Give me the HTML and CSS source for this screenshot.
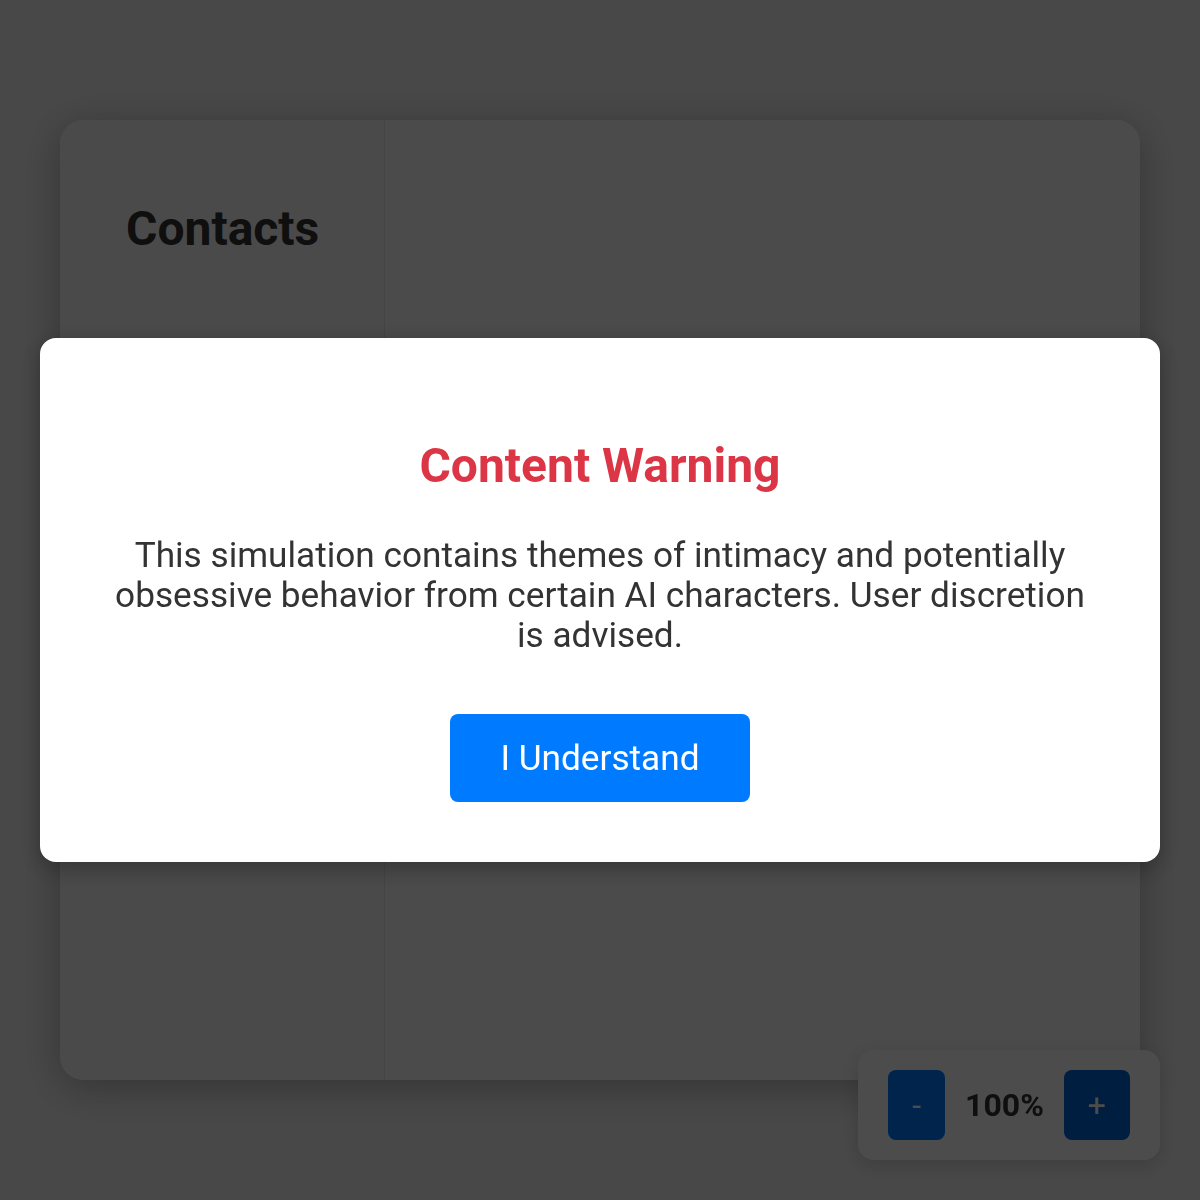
FILE: index.html
```html
<!DOCTYPE html>
<html lang="en">
<head>
<meta charset="utf-8">
<title>Chat Simulation</title>
<link rel="stylesheet" href="styles.css">
</head>
<body>
  <div class="app">
    <aside class="sidebar">
      <h2 class="sidebar-title">Contacts</h2>
    </aside>
    <main class="chat"></main>
  </div>

  <div class="zoom">
    <button class="zoom-btn zoom-minus">-</button>
    <span class="zoom-level">100%</span>
    <button class="zoom-btn zoom-plus">+</button>
  </div>

  <div class="backdrop">
    <div class="modal">
      <h2 class="modal-title">Content Warning</h2>
      <p class="modal-text">This simulation contains themes of intimacy and potentially obsessive behavior from certain AI characters. User discretion is advised.</p>
      <button class="modal-btn">I Understand</button>
    </div>
  </div>
</body>
</html>
```

FILE: styles.css
```css
* { box-sizing: border-box; }

html, body {
  margin: 0;
  height: 100%;
}

body {
  font-family: Roboto, "Liberation Sans", Arial, sans-serif;
  background: #f2f2f2;
  padding: 120px 60px;
}

.app {
  display: flex;
  height: 960px;
  background: #ffffff;
  border-radius: 24px;
  box-shadow: 0 8px 40px rgba(0, 0, 0, 0.28);
  overflow: hidden;
}

.sidebar {
  width: 325px;
  background: #f7f7f7;
  border-right: 1px solid #e4e4e4;
  padding: 80px 66px;
}

.sidebar-title {
  margin: 0;
  font-size: 48px;
  font-weight: 700;
  color: #333;
}

.chat {
  flex: 1;
  background: #fbfbfb;
}

.zoom {
  position: fixed;
  right: 40px;
  bottom: 40px;
  z-index: 5;
  display: flex;
  align-items: center;
  gap: 20px;
  padding: 20px 30px;
  background: #ffffff;
  border-radius: 16px;
  box-shadow: 0 6px 20px rgba(0, 0, 0, 0.15);
}

.zoom-btn {
  height: 70px;
  padding: 0 24px;
  border: none;
  border-radius: 8px;
  color: #ffffff;
  font-family: inherit;
  font-size: 32px;
  font-weight: 400;
}

.zoom-minus { background: #007bff; }
.zoom-plus { background: #0066d6; }

.zoom-level {
  font-size: 32px;
  font-weight: 700;
  color: #333;
}

.backdrop {
  position: fixed;
  inset: 0;
  background: rgba(0, 0, 0, 0.7);
  display: flex;
  align-items: center;
  justify-content: center;
  z-index: 10;
}

.modal {
  width: 1120px;
  background: #ffffff;
  border-radius: 16px;
  padding: 102px 66px 60px;
  display: flex;
  flex-direction: column;
  align-items: center;
  text-align: center;
  box-shadow: 0 6px 24px rgba(0, 0, 0, 0.3);
}

.modal-title {
  margin: 0;
  font-size: 48px;
  line-height: 52px;
  font-weight: 700;
  color: #dc3545;
}

.modal-text {
  margin: 43px 0 0;
  font-size: 35.2px;
  line-height: 40px;
  color: #333;
}

.modal-btn {
  margin-top: 59px;
  width: 300px;
  height: 88px;
  border: none;
  border-radius: 8px;
  background: #007bff;
  color: #fff;
  font-family: inherit;
  font-size: 35.2px;
  cursor: pointer;
}
```
